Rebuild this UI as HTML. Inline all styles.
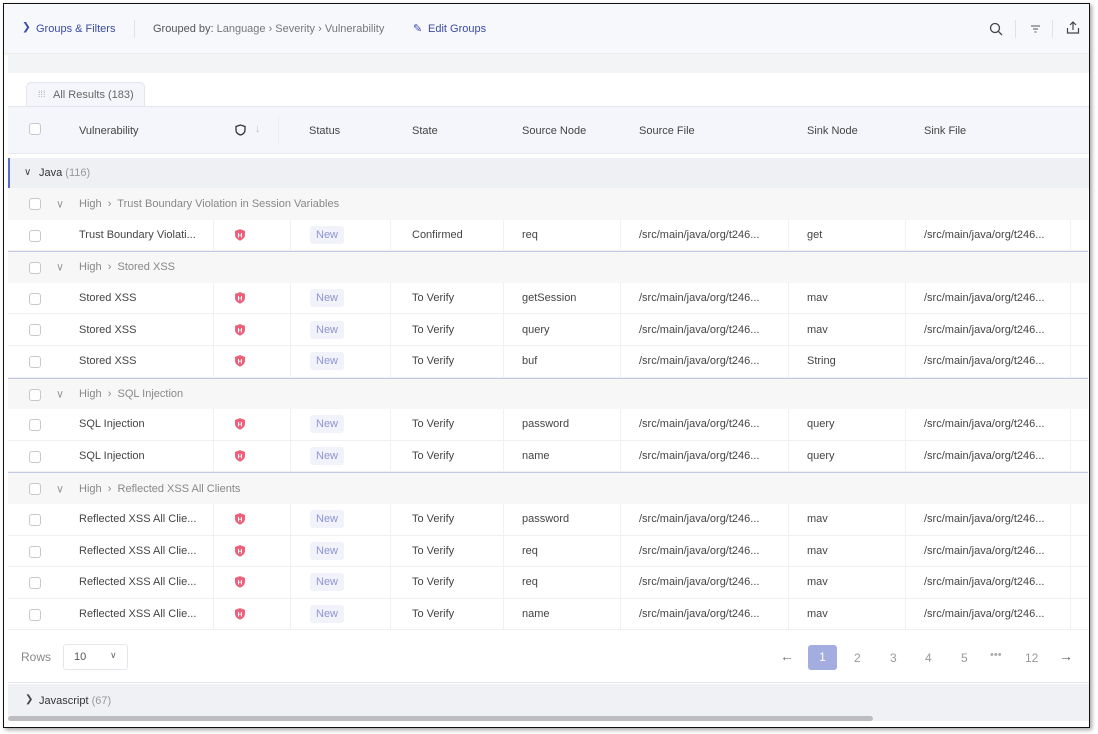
<!DOCTYPE html>
<html><head><meta charset="utf-8"><style>
*{box-sizing:border-box;margin:0;padding:0}
body{width:1098px;height:734px;background:#fff;font-family:"Liberation Sans",sans-serif;font-size:11px;color:#444;position:relative;overflow:hidden}
.frame{position:absolute;left:3px;top:3px;width:1087px;height:725px;border:1.5px solid #111;box-shadow:2px 2px 4px rgba(0,0,0,.35);overflow:hidden;background:#fff}
.a{position:absolute}
.tb{left:0;top:0;width:1086px;height:49px;background:#f6f8fc;box-shadow:0 1px 3px rgba(0,0,0,.12)}
.cb{position:absolute;width:12px;height:12px;border:1px solid #c8c8cc;border-radius:3px;background:#fff}
.row{position:absolute;left:4px;width:1080px;height:31.6px}
.sev{background:#f7f7f8}
.data{background:#fff;border-bottom:1px solid #f0f0f2}
.row span{position:absolute;top:50%;transform:translateY(-50%);white-space:nowrap}
.sep{position:absolute;top:0;bottom:0;width:1px;background:#f1f1f4}
.new{background:#f1f2fa;color:#8f95d0;padding:3px 6px;border-radius:3px}
.sh{width:12px;height:13px;display:block}
.blue{color:#3b4ba8}
</style></head><body>
<div class="frame">
<div class="a tb">
 <span class="a blue" style="left:18px;top:17px;font-size:10.5px">&#x276F;</span>
 <span class="a blue" style="left:32px;top:19px">Groups &amp; Filters</span>
 <div class="a" style="left:130px;top:16px;width:1px;height:18px;background:#e0e2ea"></div>
 <span class="a" style="left:149px;top:19px;color:#555">Grouped by: <span style="color:#777">Language › Severity › Vulnerability</span></span>
 <span class="a blue" style="left:409px;top:18px">&#x270E;</span>
 <span class="a blue" style="left:424px;top:19px">Edit Groups</span>
 <svg class="a" style="left:985px;top:18px" width="14" height="14" viewBox="0 0 14 14"><circle cx="6" cy="6" r="4.5" fill="none" stroke="#444" stroke-width="1.3"/><path d="M9.3 9.3L13 13" stroke="#444" stroke-width="1.3"/></svg>
 <div class="a" style="left:1011px;top:16px;width:1px;height:18px;background:#e0e2ea"></div>
 <svg class="a" style="left:1026px;top:20px" width="11" height="10" viewBox="0 0 11 10"><path d="M1 2h9M3 5h5M4.5 8h2" stroke="#555" stroke-width="1"/></svg>
 <div class="a" style="left:1048px;top:16px;width:1px;height:18px;background:#e0e2ea"></div>
 <svg class="a" style="left:1062px;top:16px" width="14" height="15" viewBox="0 0 14 15"><path d="M7 10V2M4 5l3-3 3 3M1.5 8v5h11V8" fill="none" stroke="#444" stroke-width="1.2"/></svg>
</div>
<div class="a" style="left:4px;top:50px;width:1082px;height:19px;background:#f3f4f6"></div>
<div class="a" style="left:22px;top:78px;width:119px;height:25px;background:#f5f6fb;border:1px solid #e3e5ee;border-bottom:none;border-radius:5px 5px 0 0"></div>
<span class="a" style="left:34px;top:85px;color:#aaa;font-size:9px">⁞⁞⁞</span>
<span class="a" style="left:49px;top:85px;color:#666">All Results (183)</span>
<div class="a" style="left:4px;top:102px;width:1082px;height:48px;background:#f5f6fb;border-top:1px solid #e3e5ee;border-bottom:1px solid #e8e9ef"></div>
<div class="cb" style="left:25px;top:119px"></div>
<span class="a" style="left:75px;top:121px;color:#444">Vulnerability</span>
<svg class="a" style="left:231px;top:120px" width="11" height="12" viewBox="0 0 11 12"><path d="M5.5 1L1 2.5V6c0 2.7 2 4.3 4.5 5 2.5-.7 4.5-2.3 4.5-5V2.5z" fill="none" stroke="#333" stroke-width="1.3"/></svg>
<span class="a" style="left:251px;top:119px;color:#bbb">↓</span>
<div class="a" style="left:274px;top:112px;width:1px;height:28px;background:#eceef4"></div>
<span class="a" style="left:305px;top:121px">Status</span>
<span class="a" style="left:408px;top:121px">State</span>
<span class="a" style="left:518px;top:121px">Source Node</span>
<span class="a" style="left:635px;top:121px">Source File</span>
<span class="a" style="left:803px;top:121px">Sink Node</span>
<span class="a" style="left:920px;top:121px">Sink File</span>
<div class="a" style="left:4px;top:154px;width:1082px;height:30px;background:#eef0f4;border-left:2px solid #5b6cc4;box-shadow:0 1px 2px rgba(0,0,0,.08)"></div>
<span class="a" style="left:20px;top:163px;color:#444;font-size:10px">&#x2228;</span>
<span class="a" style="left:35px;top:163px;color:#333">Java <span style="color:#999">(116)</span></span>

<div id="rows"></div>
<div class="a" style="left:4px;top:627px;width:1082px;height:52px;background:#fff;border-bottom:1px solid #e6e7ec"></div>
<span class="a" style="left:17px;top:646px;color:#888;font-size:12px">Rows</span>
<div class="a" style="left:59px;top:640px;width:65px;height:26px;border:1px solid #e6e7ec;border-radius:3px"></div>
<span class="a" style="left:70px;top:647px;color:#555">10</span>
<span class="a" style="left:106px;top:646px;color:#666;font-size:9px">&#x2228;</span>
<span class="a" style="left:776px;top:644px;color:#777;font-size:14px">←</span>
<div class="a" style="left:804px;top:641px;width:29px;height:25px;background:#a4ade0;border-radius:3px;color:#fff;font-size:12px;text-align:center;line-height:25px">1</div>
<span class="a" style="left:850px;top:647px;color:#999;font-size:12px">2</span>
<span class="a" style="left:886px;top:647px;color:#999;font-size:12px">3</span>
<span class="a" style="left:921px;top:647px;color:#999;font-size:12px">4</span>
<span class="a" style="left:957px;top:647px;color:#999;font-size:12px">5</span>
<span class="a" style="left:986px;top:645px;color:#aaa;font-size:11px">•••</span>
<span class="a" style="left:1021px;top:647px;color:#999;font-size:12px">12</span>
<span class="a" style="left:1055px;top:644px;color:#666;font-size:14px">→</span>
<div class="a" style="left:4px;top:680px;width:1082px;height:32px;background:#f0f1f5"></div>
<span class="a" style="left:21px;top:690px;color:#444;font-size:10px">&#x276F;</span>
<span class="a" style="left:35px;top:691px;color:#333">Javascript <span style="color:#999">(67)</span></span>
<div class="a" style="left:4px;top:712px;width:865px;height:5px;background:#bdbdc1;border-radius:3px"></div>
<div class="a" style="left:869px;top:712px;width:217px;height:5px;background:#f0f1f5"></div>
</div>
<script>
var R=[['s','Trust Boundary Violation in Session Variables'],['d','Trust Boundary Violati...','Confirmed','req','get'],
['s','Stored XSS',1],['d','Stored XSS','To Verify','getSession','mav'],['d','Stored XSS','To Verify','query','mav'],['d','Stored XSS','To Verify','buf','String'],
['s','SQL Injection',1],['d','SQL Injection','To Verify','password','query'],['d','SQL Injection','To Verify','name','query'],
['s','Reflected XSS All Clients',1],['d','Reflected XSS All Clie...','To Verify','password','mav'],['d','Reflected XSS All Clie...','To Verify','req','mav'],['d','Reflected XSS All Clie...','To Verify','req','mav'],['d','Reflected XSS All Clie...','To Verify','name','mav']];
var h='',y=184;
var sh='<svg class="sh" viewBox="0 0 10 11"><path d="M5 0.5L0.8 2V5.3c0 2.5 1.8 4 4.2 5 2.4-1 4.2-2.5 4.2-5V2z" fill="#ee5f7a"/><text x="5" y="7.6" font-size="5.5" font-family="Liberation Sans" font-weight="bold" fill="#fff" text-anchor="middle">H</text></svg>';
R.forEach(function(r){
 if(r[0]=='s'){
  h+='<div class="row sev" style="top:'+y+'px;'+(r[2]?'border-top:1px solid #c3c8e6;':'')+'"><div class="cb" style="left:21px;top:10px"></div><span style="left:48px;color:#999;font-size:11px">&#x2228;</span><span style="left:71px;color:#888">High &nbsp;›&nbsp; '+r[1]+'</span></div>';
 }else{
  h+='<div class="row data" style="top:'+y+'px"><div class="cb" style="left:21px;top:10px"></div><span style="left:71px">'+r[1]+'</span>';
  [205,282,382,495,612,780,897,1062].forEach(function(x){h+='<div class="sep" style="left:'+x+'px"></div>'});
  h+='<span style="left:226px">'+sh+'</span><span class="new" style="left:302px">New</span><span style="left:404px">'+r[2]+'</span><span style="left:514px">'+r[3]+'</span><span style="left:631px">/src/main/java/org/t246...</span><span style="left:799px">'+r[4]+'</span><span style="left:916px">/src/main/java/org/t246...</span></div>';
 }
 y+=31.6;
});
document.getElementById('rows').outerHTML=h;
</script>
</body></html>
